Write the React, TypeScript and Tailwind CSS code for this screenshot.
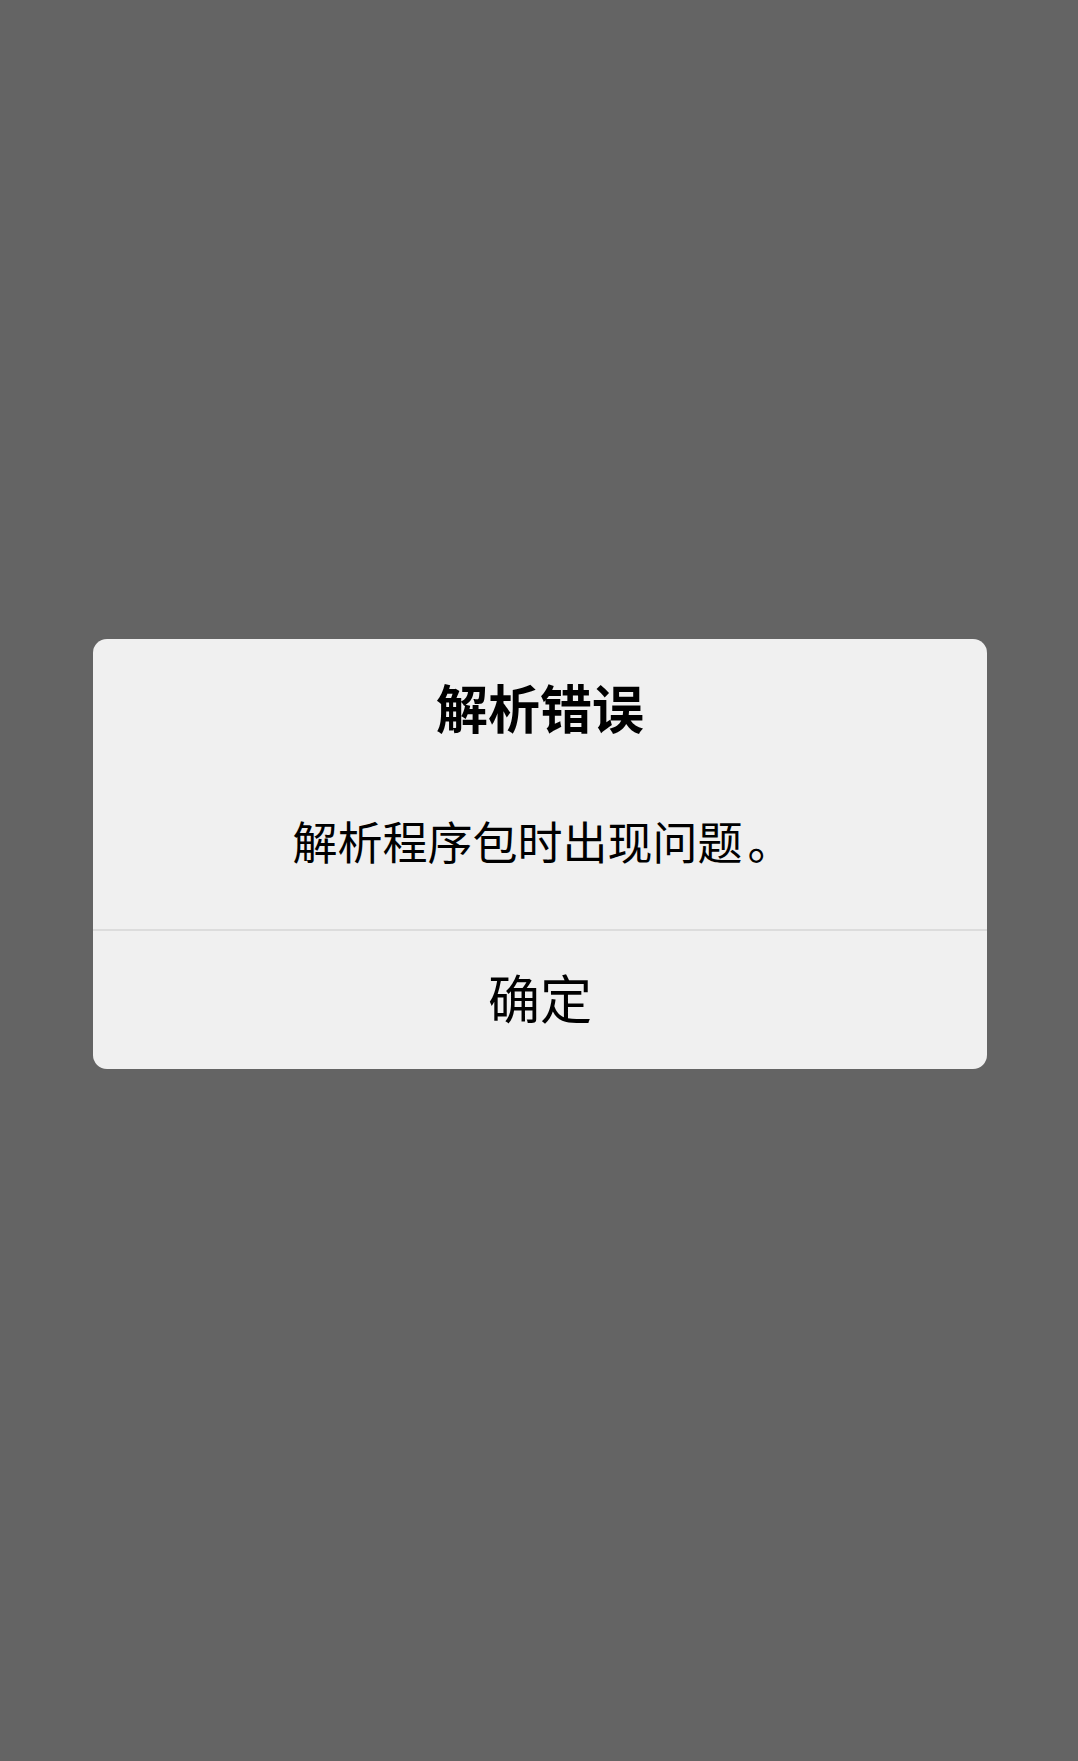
import React from 'react';

export default function App() {
  return (
    <div
      className="min-h-screen w-full bg-[#646464] flex items-center justify-center pb-[54px] pl-[2px]"
      style={{ fontFamily: '"Noto Sans CJK SC", "Noto Sans", sans-serif' }}
    >
      <div className="w-[894px] bg-[#f0f0f0] rounded-[14px] overflow-hidden">
        <div className="flex flex-col items-center pt-[38px] pb-[60px]">
          <h2 className="text-[52px] leading-[60px] font-bold text-black whitespace-nowrap">解析错误</h2>
          <p className="mt-[76px] text-[45px] leading-[56px] text-black whitespace-nowrap">
            解析程序包时出现问题<span className="inline-block pl-[5px] w-[45px]">。</span>
          </p>
        </div>
        <div className="h-[2px] bg-[#dcdcdc]" />
        <button className="w-full h-[138px] flex items-center justify-center pb-[6px] text-[52px] text-black">
          确定
        </button>
      </div>
    </div>
  );
}
